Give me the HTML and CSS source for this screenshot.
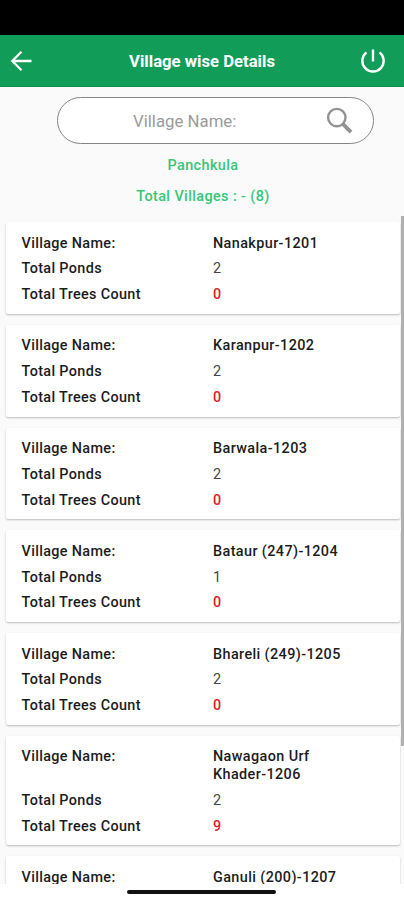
FILE: index.html
```html
<!DOCTYPE html>
<html lang="en">
<head>
    <meta charset="UTF-8">
    <meta name="viewport" content="width=device-width, initial-scale=1.0">
    <title>Village wise Details</title>
    <link rel="stylesheet" href="styles.css">
</head>
<body>
    <div class="status-bar"></div>

    <header class="app-bar">
        <svg class="back-icon" width="22" height="22" viewBox="0 0 22 22" fill="none" stroke="#fff" stroke-width="2.3">
            <path d="M21.5 11H2.5M11.5 1.7L2.3 11L11.5 20.3"/>
        </svg>
        <h1>Village wise Details</h1>
        <svg class="power-icon" width="26" height="26" viewBox="0 0 26 26" fill="none" stroke="#fff" stroke-width="2.4">
            <path d="M13 1.5V13.5M6.4 4.4A10.7 10.7 0 1 0 19.6 4.4"/>
        </svg>
    </header>

    <div class="search">
        <span class="search-hint">Village Name:</span>
        <svg class="search-icon" width="27" height="27" viewBox="0 0 27 27" fill="none" stroke="#929292">
            <circle cx="10.8" cy="10.6" r="8.7" stroke-width="2.4"/>
            <path d="M16.8 16.8L25 25.2" stroke-width="3.8"/>
        </svg>
    </div>

    <p class="district">Panchkula</p>
    <p class="total">Total Villages : - (8)</p>

    <main class="list">
        <div class="card">
            <div class="row"><span class="label">Village Name:</span><span class="name">Nanakpur-1201</span></div>
            <div class="row"><span class="label">Total Ponds</span><span class="ponds">2</span></div>
            <div class="row"><span class="label">Total Trees Count</span><span class="trees">0</span></div>
        </div>
        <div class="card">
            <div class="row"><span class="label">Village Name:</span><span class="name">Karanpur-1202</span></div>
            <div class="row"><span class="label">Total Ponds</span><span class="ponds">2</span></div>
            <div class="row"><span class="label">Total Trees Count</span><span class="trees">0</span></div>
        </div>
        <div class="card">
            <div class="row"><span class="label">Village Name:</span><span class="name">Barwala-1203</span></div>
            <div class="row"><span class="label">Total Ponds</span><span class="ponds">2</span></div>
            <div class="row"><span class="label">Total Trees Count</span><span class="trees">0</span></div>
        </div>
        <div class="card">
            <div class="row"><span class="label">Village Name:</span><span class="name">Bataur (247)-1204</span></div>
            <div class="row"><span class="label">Total Ponds</span><span class="ponds">1</span></div>
            <div class="row"><span class="label">Total Trees Count</span><span class="trees">0</span></div>
        </div>
        <div class="card">
            <div class="row"><span class="label">Village Name:</span><span class="name">Bhareli (249)-1205</span></div>
            <div class="row"><span class="label">Total Ponds</span><span class="ponds">2</span></div>
            <div class="row"><span class="label">Total Trees Count</span><span class="trees">0</span></div>
        </div>
        <div class="card">
            <div class="row"><span class="label">Village Name:</span><span class="name">Nawagaon Urf<br>Khader-1206</span></div>
            <div class="row"><span class="label">Total Ponds</span><span class="ponds">2</span></div>
            <div class="row"><span class="label">Total Trees Count</span><span class="trees">9</span></div>
        </div>
        <div class="card">
            <div class="row"><span class="label">Village Name:</span><span class="name">Ganuli (200)-1207</span></div>
        </div>
        <div class="scrollbar"></div>
    </main>

    <footer class="nav-bar">
        <div class="home-pill"></div>
    </footer>
</body>
</html>
```
FILE: styles.css
```css
* {
    box-sizing: border-box;
}
body {
    margin: 0;
    height: 900px;
    display: flex;
    flex-direction: column;
    overflow: hidden;
    background: #fafafa;
    font-family: Roboto, sans-serif;
    color: #1c1c1c;
}
.status-bar {
    flex: none;
    height: 35px;
    background: #000;
}
.app-bar {
    flex: none;
    height: 52px;
    display: grid;
    grid-template-columns: 26px 1fr 26px;
    align-items: center;
    padding: 1px 18px 0 10px;
    background: #119d58;
    border-bottom: 1px solid #0b9049;
}
.app-bar h1 {
    margin: 0;
    padding: 1px 0 0 8px;
    text-align: center;
    font-size: 16.7px;
    font-weight: 700;
    color: #fff;
}
.search {
    flex: none;
    display: flex;
    align-items: center;
    justify-content: space-between;
    width: 317px;
    height: 47px;
    margin: 10px 0 0 57px;
    padding: 0 20px 0 75px;
    background: #fff;
    border: 1px solid #858585;
    border-radius: 24px;
}
.search-hint {
    font-size: 16.8px;
    color: #9b9b9b;
}
.district,
.total {
    flex: none;
    margin: 13px 0 0;
    padding-left: 2px;
    text-align: center;
    font-size: 14.4px;
    font-weight: 500;
    line-height: 18px;
    letter-spacing: 0.4px;
    color: #36c777;
}
.list {
    flex: 1;
    min-height: 0;
    position: relative;
    display: flex;
    flex-direction: column;
    gap: 11px;
    margin-top: 10px;
    padding: 6px 4px 0 6px;
    overflow: hidden;
}
.card {
    flex: none;
    display: flex;
    flex-direction: column;
    gap: 8px;
    padding: 12.5px 16px 10.2px 15.5px;
    background: #fff;
    border-radius: 2px;
    box-shadow: 0 1px 2px rgba(0, 0, 0, 0.26);
}
.row {
    display: grid;
    grid-template-columns: 191.5px 1fr;
    font-size: 14.4px;
    font-weight: 500;
    line-height: 17.7px;
    letter-spacing: 0.4px;
}
.label {
    letter-spacing: 0.35px;
}
.ponds {
    font-weight: 400;
    color: #444;
}
.trees {
    color: #e0202a;
}
.scrollbar {
    position: absolute;
    top: 0;
    right: 0;
    width: 3px;
    height: 530px;
    background: #b0b0b0;
}
.nav-bar {
    flex: none;
    height: 16px;
    display: flex;
    justify-content: center;
    padding: 6px 1px 0 0;
    background: #fff;
}
.home-pill {
    width: 149px;
    height: 4px;
    border-radius: 2px;
    background: #111;
}
```
